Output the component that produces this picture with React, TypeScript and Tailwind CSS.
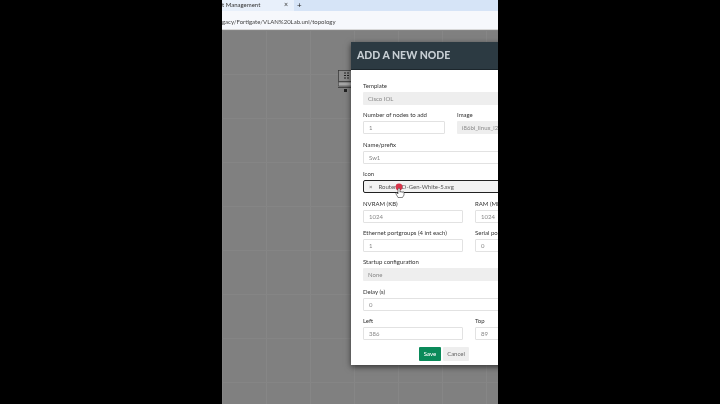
import React from "react";

const Label = ({ children }: { children: React.ReactNode }) => (
  <div className="h-[6px] text-[6px] leading-[6px] text-[#333] whitespace-nowrap">{children}</div>
);

const Field = ({ label, value, grey, className }: { label: string; value: string; grey?: boolean; className?: string }) => (
  <div className={className}>
    <Label>{label}</Label>
    <div
      className={`mt-[3px] h-[13px] flex items-center pl-[5px] rounded-[1px] text-[6px] text-[#888] whitespace-nowrap overflow-hidden ${
        grey ? "bg-[#eeeeee]" : "bg-white border border-[#e2e2e2]"
      }`}
    >
      {value}
    </div>
  </div>
);

const NodeIcon = () => (
  <div className="absolute left-[116px] top-[40px] w-[16px]">
    <svg width="16" height="22" viewBox="0 0 16 22">
      <rect x="0.5" y="0.5" width="15" height="11" fill="#8a8a8a" stroke="#333" strokeWidth="0.7" />
      <path d="M6 3h2M9 3h2M6 5.500h2M9 5.500h2M6 8h2M9 8h2" stroke="#222" strokeWidth="1.200" />
      <rect x="0.500" y="12" width="15" height="4" fill="#a5a5a5" stroke="#444" strokeWidth="0.600" />
      <rect x="0" y="17" width="16" height="1" fill="#444" />
      <rect x="6" y="19" width="3" height="3" fill="#222" />
    </svg>
  </div>
);

const Cursor = () => (
  <div className="absolute left-[44px] top-[113px] z-10">
    <svg width="12" height="16" viewBox="0 0 12 16">
      <circle cx="4" cy="4" r="3.400" fill="#d8344a" />
      <path
        d="M3 6v5L2 10c-.7-.6-1.500.1-1 .9L3 14.500h4.500L9 12V9.500c0-.9-1.200-.9-1.300-.2 0-.8-1.300-.9-1.400-.1 0-.8-1.300-.8-1.300 0V6c0-1-2-1-2 0z"
        fill="#fff"
        stroke="#333"
        strokeWidth="0.600"
      />
    </svg>
  </div>
);

export default function App() {
  return (
    <div className="w-[720px] h-[404px] bg-black flex justify-center overflow-hidden font-['Lato',sans-serif]">
      <div className="w-[276px] h-full flex flex-col overflow-hidden blur-[0.4px]">
        {/* browser tab strip */}
        <div className="h-[11px] bg-[#d6e4f7] flex items-center shrink-0">
          <div className="w-[72px] h-full pb-[2px] bg-[#e8f0fb] flex items-center justify-between pr-[6px] text-[6px] text-[#333] whitespace-nowrap overflow-hidden">
            <span>t Management</span>
            <span className="text-[7px] leading-none">×</span>
          </div>
          <span className="ml-[3px] pb-[2px] text-[8px] leading-none text-[#222]">+</span>
        </div>
        {/* address bar */}
        <div className="h-[19px] pt-[2px] bg-[#f6f8fc] flex items-center text-[6px] text-[#444] whitespace-nowrap shrink-0 border-b border-[#d8d8d8]">
          gacy/Fortigate/VLAN%20Lab.unl/topology
        </div>
        {/* topology canvas */}
        <div className="relative flex-1 bg-[#808080] bg-[linear-gradient(#858585_1px,transparent_1px),linear-gradient(90deg,#868686_1px,transparent_1px)] bg-[size:44px_44px]">
          <NodeIcon />
          <div className="absolute left-[129px] top-[12px] w-[170px] h-[323px] flex flex-col shadow-[0_2px_6px_rgba(0,0,0,0.6)]">
            <div className="h-[28px] bg-[#2c3a42] border-b border-[#1c262c] flex items-center pl-[6px] text-[10.500px] font-black text-[#c6ced3] whitespace-nowrap shrink-0">
              ADD A NEW NODE
            </div>
            <div className="relative flex-1 bg-white pl-[12px] pt-[13px] flex flex-col gap-[7.400px]">
              <Field label="Template" value="Cisco IOL" grey className="w-[200px]" />
              <div className="flex gap-[12px]">
                <Field label="Number of nodes to add" value="1" className="w-[82px] shrink-0" />
                <Field label="Image" value="i86bi_linux_l2-adventerprise" grey className="w-[100px] shrink-0" />
              </div>
              <Field label="Name/prefix" value="Sw1" className="w-[200px]" />
              <div className="w-[200px]">
                <Label>Icon</Label>
                <div className="mt-[3px] h-[13px] flex items-center pl-[5px] gap-[6px] bg-[#f2f2f2] border border-[#222] rounded-[2px] text-[6px] text-[#555] whitespace-nowrap">
                  <span>×</span>
                  <span>Router-3D-Gen-White-5.svg</span>
                </div>
              </div>
              <div className="flex gap-[12px]">
                <Field label="NVRAM (KB)" value="1024" className="w-[100px] shrink-0" />
                <Field label="RAM (MB)" value="1024" className="w-[100px] shrink-0" />
              </div>
              <div className="flex gap-[12px]">
                <Field label="Ethernet portgroups (4 int each)" value="1" className="w-[100px] shrink-0" />
                <Field label="Serial portgroups" value="0" className="w-[100px] shrink-0" />
              </div>
              <Field label="Startup configuration" value="None" grey className="w-[200px]" />
              <Field label="Delay (s)" value="0" className="w-[200px]" />
              <div className="flex gap-[12px]">
                <Field label="Left" value="386" className="w-[100px] shrink-0" />
                <Field label="Top" value="89" className="w-[100px] shrink-0" />
              </div>
              <div className="flex gap-[2px] pl-[56px] -mt-[1px]">
                <div className="w-[22px] h-[14px] bg-[#0a8a5a] rounded-[1px] flex items-center justify-center text-[6px] font-semibold text-white">
                  Save
                </div>
                <div className="w-[26px] h-[14px] bg-[#eeeeee] rounded-[1px] flex items-center justify-center text-[6px] text-[#666]">
                  Cancel
                </div>
              </div>
              <Cursor />
            </div>
          </div>
        </div>
      </div>
    </div>
  );
}
